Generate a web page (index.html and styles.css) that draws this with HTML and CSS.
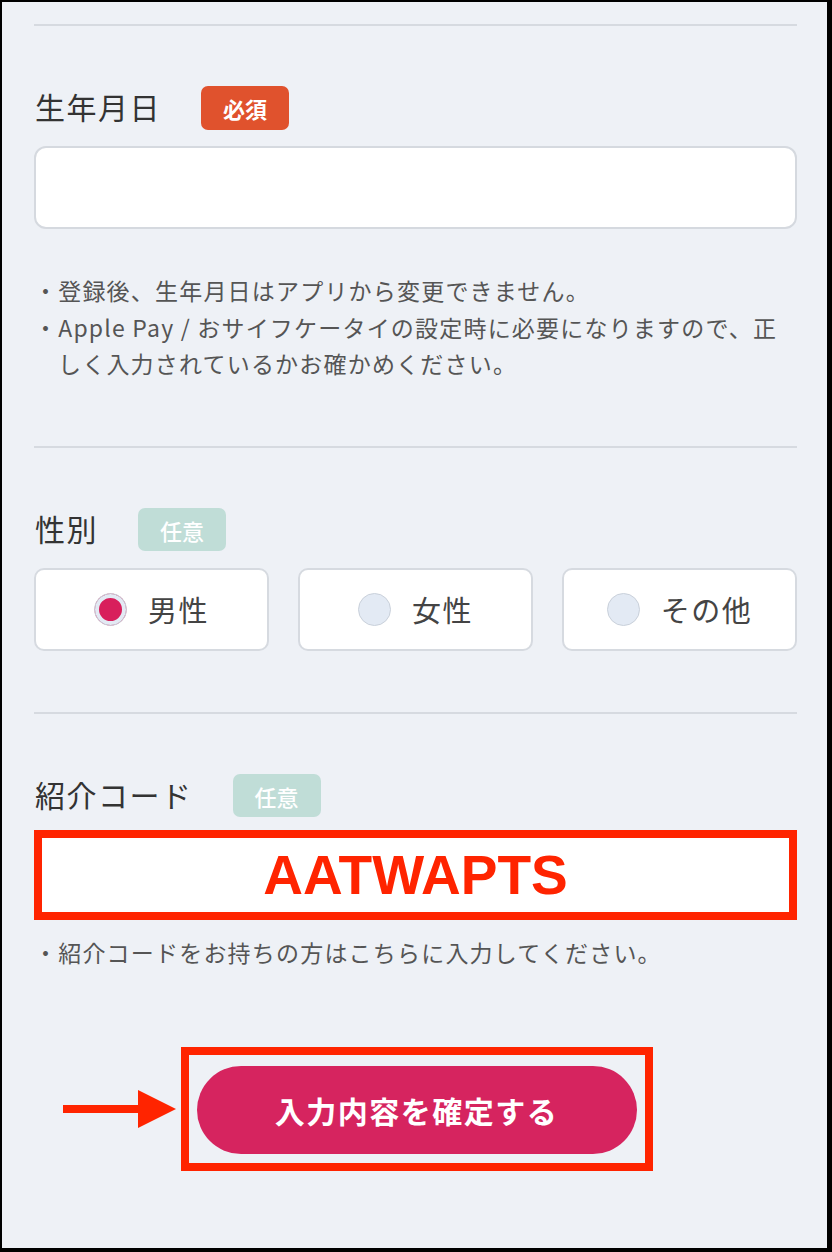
FILE: index.html
```html
<!DOCTYPE html>
<html lang="ja">
<head>
    <meta charset="UTF-8">
    <meta name="viewport" content="width=device-width, initial-scale=1.0">
    <title>会員登録</title>
    <link rel="stylesheet" href="styles.css">
</head>
<body>
<div class="frame">

    <hr class="rule">

    <div class="field">
        <div class="field-head">
            <span class="field-label">生年月日</span>
            <span class="badge badge-required">必須</span>
        </div>
        <input type="text" class="text-input" id="birthday">
        <ul class="notes">
            <li>・登録後、生年月日はアプリから変更できません。</li>
            <li>・Apple Pay / おサイフケータイの設定時に必要になりますので、正しく入力されているかお確かめください。</li>
        </ul>
    </div>

    <hr class="rule">

    <div class="field">
        <div class="field-head">
            <span class="field-label">性別</span>
            <span class="badge badge-optional">任意</span>
        </div>
        <div class="gender">
            <label class="option">
                <input type="radio" name="gender" value="male" checked>
                <span class="dot"></span>
                <span class="option-text">男性</span>
            </label>
            <label class="option">
                <input type="radio" name="gender" value="female">
                <span class="dot"></span>
                <span class="option-text">女性</span>
            </label>
            <label class="option">
                <input type="radio" name="gender" value="other">
                <span class="dot"></span>
                <span class="option-text">その他</span>
            </label>
        </div>
    </div>

    <hr class="rule">

    <div class="field field-last">
        <div class="field-head">
            <span class="field-label">紹介コード</span>
            <span class="badge badge-optional">任意</span>
        </div>
        <input type="text" class="code-input" id="code" value="AATWAPTS">
        <ul class="notes">
            <li>・紹介コードをお持ちの方はこちらに入力してください。</li>
        </ul>
    </div>

    <div class="submit-wrap">
        <svg class="arrow" width="113" height="40" viewBox="0 0 113 40">
            <rect x="0" y="16" width="76" height="8" fill="#ff2400"/>
            <polygon points="75,1 113,20 75,39" fill="#ff2400"/>
        </svg>
        <button class="submit">入力内容を確定する</button>
    </div>

</div>
</body>
</html>
```

FILE: styles.css
```css
body {
    margin: 0;
    font-family: "Noto Sans CJK JP", "Noto Sans", sans-serif;
}

.frame {
    box-sizing: border-box;
    height: 1252px;
    border-style: solid;
    border-color: #000;
    border-width: 2px 5px 4px 2px;
    background-color: #eef1f6;
    padding: 22px 30px 0 32px;
}

.rule {
    border: 0;
    border-top: 2px solid #d6dae0;
    margin: 0;
}

.field {
    padding: 60px 0 61px;
}

.field-last {
    padding-bottom: 0;
}

.field-head {
    display: flex;
    align-items: center;
    gap: 40px;
    height: 44px;
    margin-bottom: 16px;
}

.field-label {
    font-size: 30px;
    letter-spacing: 1.5px;
    color: #333;
    margin-left: 1px;
    margin-top: -4px;
}

.badge {
    display: flex;
    align-items: center;
    height: 44px;
    padding: 0 22px;
    border-radius: 7px;
    font-size: 22px;
    font-weight: 700;
    color: #fff;
}

.badge-required {
    background-color: #e0522d;
}

.badge-optional {
    height: 43px;
    background-color: #c0ddd7;
    font-weight: 500;
}

.text-input {
    display: block;
    box-sizing: border-box;
    width: 100%;
    height: 83px;
    margin: 0;
    border: 2px solid #d5d9df;
    border-radius: 12px;
    background: #fff;
}

.notes {
    list-style: none;
    margin: 43px 0 3px;
    padding: 0 0 0 24px;
    font-size: 23px;
    line-height: 36.5px;
    letter-spacing: 1.2px;
    color: #555;
}

.notes li {
    text-indent: -24px;
}

.field-last .notes {
    margin-top: 14px;
}

/* gender radio boxes */
.gender {
    display: grid;
    grid-template-columns: repeat(3, 1fr);
    gap: 29px;
}

.option {
    display: flex;
    align-items: center;
    justify-content: center;
    gap: 21px;
    box-sizing: border-box;
    height: 83px;
    background: #fff;
    border: 2px solid #d6dae0;
    border-radius: 10px;
}

.option input {
    display: none;
}

.dot {
    box-sizing: border-box;
    width: 33px;
    height: 33px;
    border-radius: 50%;
    border: 1.5px solid #c9d0da;
    background-color: #e3eaf4;
}

.option input:checked + .dot {
    background-color: #d81f5c;
    box-shadow: inset 0 0 0 4px #e3eaf4;
}

.option-text {
    font-size: 29px;
    letter-spacing: 1.5px;
    color: #444;
}

.code-input {
    display: block;
    box-sizing: border-box;
    width: 100%;
    height: 90px;
    margin: -4px 0 0;
    border: 8px solid #ff2400;
    border-radius: 0;
    background: #fff;
    text-align: center;
    font-family: "Liberation Sans", Arial, sans-serif;
    font-size: 55px;
    font-weight: 700;
    color: #ff2400;
    padding: 0;
}

/* submit area */
.submit-wrap {
    position: relative;
    box-sizing: border-box;
    width: 472px;
    margin: 77px auto 0;
    padding: 11px 8px 9px;
    border: 8px solid #ff2400;
    transform: translateX(1px);
}

.arrow {
    position: absolute;
    right: calc(100% + 13px);
    top: 50%;
    transform: translateY(-50%);
}

.submit {
    display: block;
    width: 100%;
    height: 88px;
    border: 0;
    border-radius: 44px;
    background-color: #d6245f;
    color: #fff;
    font-family: "Noto Sans CJK JP", "Noto Sans", sans-serif;
    font-size: 30px;
    font-weight: 700;
    letter-spacing: 1.5px;
}
```
